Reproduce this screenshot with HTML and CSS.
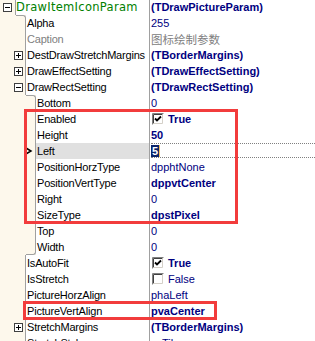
FILE: index.html
```html
<!DOCTYPE html>
<html>
<head>
    <link rel="stylesheet" href="styles.css">
</head>
<body>
    <div class="grid">
        <div class="row">
            <div class="key">
                <div class="gut l0"><svg class="btn b0" viewBox="0 0 9 9"><rect x="0.5" y="0.5" width="8" height="8"/><path d="M2 4.5H7"/></svg></div>
                <div class="name cat">DrawItemIconParam</div>
            </div>
            <div class="val bold">(TDrawPictureParam)</div>
        </div>
        <div class="row">
            <div class="key">
                <div class="gut split"><div class="step in"></div></div>
                <div class="name">Alpha</div>
            </div>
            <div class="val">255</div>
        </div>
        <div class="row">
            <div class="key">
                <div class="gut"></div>
                <div class="name off">Caption</div>
            </div>
            <div class="val off cjk">图标绘制参数</div>
        </div>
        <div class="row">
            <div class="key">
                <div class="gut"><svg class="btn b1" viewBox="0 0 9 9"><rect x="0.5" y="0.5" width="8" height="8"/><path d="M2 4.5H7M4.5 2V7"/></svg></div>
                <div class="name">DestDrawStretchMargins</div>
            </div>
            <div class="val bold">(TBorderMargins)</div>
        </div>
        <div class="row">
            <div class="key">
                <div class="gut"><svg class="btn b1" viewBox="0 0 9 9"><rect x="0.5" y="0.5" width="8" height="8"/><path d="M2 4.5H7M4.5 2V7"/></svg></div>
                <div class="name">DrawEffectSetting</div>
            </div>
            <div class="val bold">(TDrawEffectSetting)</div>
        </div>
        <div class="row">
            <div class="key">
                <div class="gut"><svg class="btn b1" viewBox="0 0 9 9"><rect x="0.5" y="0.5" width="8" height="8"/><path d="M2 4.5H7"/></svg></div>
                <div class="name">DrawRectSetting</div>
            </div>
            <div class="val bold">(TDrawRectSetting)</div>
        </div>
        <div class="row">
            <div class="key">
                <div class="gut l2 split"><div class="step in"></div></div>
                <div class="name">Bottom</div>
            </div>
            <div class="val">0</div>
        </div>
        <div class="row">
            <div class="key">
                <div class="gut l2"></div>
                <div class="name">Enabled</div>
            </div>
            <div class="val bold"><svg class="check" viewBox="0 0 12 12"><rect x="1" y="1" width="10" height="10" fill="#fff"/><path d="M0.5 11.5V0.5H11.5" stroke="#808080"/><path d="M1.5 10.5V1.5H10.5" stroke="#404040"/><path d="M1.5 10.5H10.5V1.5" stroke="#d4d0c8"/><path d="M3 5.5L5 7.5L9 3.5" stroke="#000" stroke-width="1.8"/></svg>True</div>
        </div>
        <div class="row">
            <div class="key">
                <div class="gut l2"></div>
                <div class="name">Height</div>
            </div>
            <div class="val bold">50</div>
        </div>
        <div class="row">
            <div class="key">
                <div class="gut l2"><svg class="arrow" viewBox="0 0 8 8"><path d="M1 1L6 4L1 7Z"/></svg></div>
                <div class="name current">Left</div>
            </div>
            <div class="val"><div class="edit"><span class="sel">5</span><span class="caret"></span></div></div>
        </div>
        <div class="row">
            <div class="key">
                <div class="gut l2"></div>
                <div class="name">PositionHorzType</div>
            </div>
            <div class="val">dpphtNone</div>
        </div>
        <div class="row">
            <div class="key">
                <div class="gut l2"></div>
                <div class="name">PositionVertType</div>
            </div>
            <div class="val bold">dppvtCenter</div>
        </div>
        <div class="row">
            <div class="key">
                <div class="gut l2"></div>
                <div class="name">Right</div>
            </div>
            <div class="val">0</div>
        </div>
        <div class="row">
            <div class="key">
                <div class="gut l2"></div>
                <div class="name">SizeType</div>
            </div>
            <div class="val bold">dpstPixel</div>
        </div>
        <div class="row">
            <div class="key">
                <div class="gut l2"></div>
                <div class="name">Top</div>
            </div>
            <div class="val">0</div>
        </div>
        <div class="row">
            <div class="key">
                <div class="gut l2 split"><div class="step out"></div></div>
                <div class="name">Width</div>
            </div>
            <div class="val">0</div>
        </div>
        <div class="row">
            <div class="key">
                <div class="gut"></div>
                <div class="name">IsAutoFit</div>
            </div>
            <div class="val bold"><svg class="check" viewBox="0 0 12 12"><rect x="1" y="1" width="10" height="10" fill="#fff"/><path d="M0.5 11.5V0.5H11.5" stroke="#808080"/><path d="M1.5 10.5V1.5H10.5" stroke="#404040"/><path d="M1.5 10.5H10.5V1.5" stroke="#d4d0c8"/><path d="M3 5.5L5 7.5L9 3.5" stroke="#000" stroke-width="1.8"/></svg>True</div>
        </div>
        <div class="row">
            <div class="key">
                <div class="gut"></div>
                <div class="name">IsStretch</div>
            </div>
            <div class="val"><svg class="check" viewBox="0 0 12 12"><rect x="1" y="1" width="10" height="10" fill="#fff"/><path d="M0.5 11.5V0.5H11.5" stroke="#808080"/><path d="M1.5 10.5V1.5H10.5" stroke="#404040"/><path d="M1.5 10.5H10.5V1.5" stroke="#d4d0c8"/></svg>False</div>
        </div>
        <div class="row">
            <div class="key">
                <div class="gut"></div>
                <div class="name">PictureHorzAlign</div>
            </div>
            <div class="val">phaLeft</div>
        </div>
        <div class="row">
            <div class="key">
                <div class="gut"></div>
                <div class="name">PictureVertAlign</div>
            </div>
            <div class="val bold">pvaCenter</div>
        </div>
        <div class="row">
            <div class="key">
                <div class="gut"><svg class="btn b1" viewBox="0 0 9 9"><rect x="0.5" y="0.5" width="8" height="8"/><path d="M2 4.5H7M4.5 2V7"/></svg></div>
                <div class="name">StretchMargins</div>
            </div>
            <div class="val bold">(TBorderMargins)</div>
        </div>
        <div class="row">
            <div class="key">
                <div class="gut"></div>
                <div class="name">StretchStyle</div>
            </div>
            <div class="val">ssTile</div>
        </div>
    </div>

    <div class="mark mark-a"></div>
    <div class="mark mark-b"></div>
</body>
</html>
```

FILE: styles.css
```css
body {
    margin: 0;
    background: #fff;
    font-family: "Liberation Sans", Arial, sans-serif;
    font-size: 11px;
    overflow: hidden;
}
.grid {
    margin-top: -1px;
}
.row {
    display: flex;
    height: 16px;
    line-height: 16px;
    white-space: nowrap;
}
.key {
    width: 149px;
    display: flex;
    flex-shrink: 0;
}
.gut {
    width: 26px;
    flex-shrink: 0;
    box-sizing: border-box;
    background: #fdf8ec;
    border-right: 1px solid #a0a0a0;
    display: flex;
    align-items: flex-start;
}
.gut.l0 {
    width: 16px;
}
.gut.l2 {
    width: 36px;
}
.gut.split {
    border-right: none;
    justify-content: flex-end;
}
.step {
    width: 10px;
    height: 16px;
    box-sizing: border-box;
    border-right: 1px solid #a0a0a0;
}
.step.in {
    border-top: 1px solid #a0a0a0;
    border-top-right-radius: 3px;
}
.step.out {
    border-bottom: 1px solid #a0a0a0;
    border-bottom-right-radius: 3px;
}
.btn {
    width: 9px;
    height: 9px;
    margin-top: 4px;
    fill: #fff;
    stroke: #404040;
    stroke-width: 1;
}
.btn path {
    stroke: #000;
}
.btn.b0 {
    margin-left: 3px;
}
.btn.b1 {
    margin-left: 14px;
}
.arrow {
    width: 8px;
    height: 8px;
    margin: 4px 0 0 25px;
    fill: none;
    stroke: #000;
    stroke-width: 1.5;
}
.name {
    flex: 1;
    background: #fff;
    color: #000;
    padding-left: 1px;
    letter-spacing: -0.2px;
    overflow: hidden;
}
.name.cat {
    padding-left: 0;
    color: #008000;
    font-family: "DejaVu Sans", Verdana, sans-serif;
    font-size: 11.5px;
    letter-spacing: 0.3px;
}
.name.current {
    background: #e0e0e0;
}
.off {
    color: #808080;
}
.cjk {
    font-family: "Noto Sans CJK SC", sans-serif;
    font-size: 11.5px;
}
.val {
    flex: 1;
    border-left: 1px solid #a0a0a0;
    padding-left: 1px;
    color: #000080;
    display: flex;
    align-items: flex-start;
}
.val.off {
    color: #808080;
}
.bold {
    font-weight: bold;
}
.check {
    width: 12px;
    height: 12px;
    margin: 2px 4px 0 1px;
    fill: none;
}
.edit {
    flex: 1;
    height: 15px;
    box-sizing: border-box;
    border-top: 1px dotted #808080;
    border-bottom: 1px dotted #808080;
    display: flex;
    align-items: center;
}
.sel {
    background: #0a246a;
    color: #fff;
    font-weight: bold;
    line-height: 12px;
    padding: 0 1px;
}
.caret {
    width: 1px;
    height: 12px;
    background: #f0c060;
}
.mark {
    position: absolute;
    box-sizing: border-box;
    border: 3px solid #f23c3c;
}
.mark-a {
    left: 24px;
    top: 109px;
    width: 214px;
    height: 115px;
}
.mark-b {
    left: 23px;
    top: 301px;
    width: 194px;
    height: 19px;
}
```
